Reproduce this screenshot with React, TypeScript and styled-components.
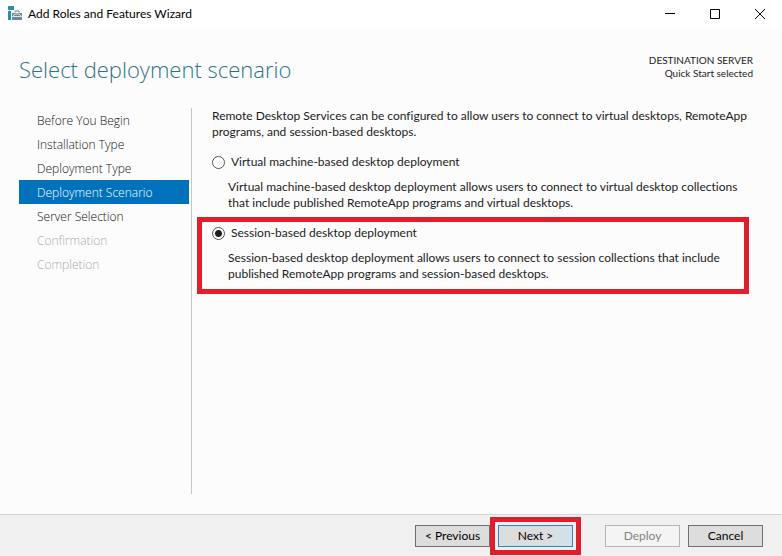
import React, { useState } from "react";
import styled, { createGlobalStyle, css } from "styled-components";

const GlobalStyle = createGlobalStyle`
  *, *::before, *::after { box-sizing: border-box; }
  body {
    margin: 0;
    background: #fcfcfc;
    color: #1b1b1b;
    font: 12px/16px Lato, "Open Sans", sans-serif;
    font-variant-ligatures: none;
  }
  h1, p, ol { margin: 0; padding: 0; }
`;

const Window = styled.div`
  display: flex;
  flex-direction: column;
  min-height: 100vh;
`;

const TitleBar = styled.header`
  display: flex;
  align-items: center;
  gap: 6px;
  height: 28px;
  padding-left: 7px;
  background: #fff;
  color: #000;
`;

const WindowTitle = styled.span`
  flex: 1;
`;

const CaptionButtons = styled.div`
  display: flex;
`;

const CaptionButton = styled.button`
  display: grid;
  place-items: center;
  width: 45px;
  height: 28px;
  padding: 0;
  border: 0;
  background: none;
  color: #000;
`;

const Heading = styled.div`
  display: flex;
  justify-content: space-between;
  align-items: flex-start;
  padding: 24px 29px 0 19px;
  height: 80px;
`;

const PageTitle = styled.h1`
  font-family: "Open Sans", sans-serif;
  font-size: 22px;
  line-height: 34px;
  font-weight: 300;
  color: #2e7385;
`;

const Destination = styled.div`
  padding-top: 2px;
  font-size: 10px;
  line-height: 13px;
  text-align: right;
`;

const Body = styled.main`
  display: flex;
  flex: 1;
  padding: 0 19px 20px;
`;

const Steps = styled.nav`
  flex: none;
  width: 173px;
  padding-right: 2px;
  border-right: 1px solid #c6c6c6;
`;

const StepList = styled.ol`
  list-style: none;
`;

const Step = styled.a<{ $state?: "current" | "disabled" }>`
  display: block;
  padding: 2px 0 0 18px;
  font-family: "Open Sans", sans-serif;
  font-size: 12px;
  line-height: 22px;
  font-weight: 300;
  text-decoration: none;
  color: #111;
  ${(p) => p.$state === "current" && css`background: #0072bc; color: #fff;`}
  ${(p) => p.$state === "disabled" && css`color: #aaa;`}
`;

const Content = styled.section`
  flex: 1;
  min-width: 0;
  padding: 0 8px 0 20px;
`;

const Options = styled.div`
  padding-top: 14px;
`;

const Option = styled.div`
  position: relative;
  padding-bottom: 14px;
`;

const OptionLabel = styled.label`
  display: flex;
  align-items: center;
  gap: 6px;
`;

const Radio = styled.input`
  appearance: none;
  flex: none;
  width: 13px;
  height: 13px;
  margin: 0;
  border: 1px solid #555;
  border-radius: 50%;
  background: #fff;
  &:checked { background: radial-gradient(circle, #1c1c1c 0 3px, #fff 4px); }
`;

const OptionText = styled.p`
  padding: 9px 0 0 16px;
`;

const Highlight = styled.span<{ $area: "option" | "button" }>`
  position: absolute;
  border: 5px solid #df1f2b;
  pointer-events: none;
  ${(p) => p.$area === "option"
    ? css`inset: -8px 6px 2px -15px;`
    : css`inset: -8px;`}
`;

const Footer = styled.footer`
  display: flex;
  justify-content: flex-end;
  gap: 8px;
  height: 42px;
  padding: 10px 19px 0 0;
  border-top: 1px solid #d5d5d5;
  background: #f0f0f0;
`;

const ButtonSlot = styled.div`
  position: relative;
  height: 22px;
`;

const Button = styled.button<{ $primary?: boolean }>`
  width: 75px;
  height: 22px;
  padding: 0;
  border: 1px solid #707070;
  background: #ddd;
  color: #000;
  font: inherit;
  ${(p) => p.$primary && css`
    border-color: #3c7fb1;
    background: linear-gradient(to right, #ddd 60%, #cfe3ee);
    box-shadow: inset 0 0 0 1px #cfe6f2;
  `}
  &:disabled { border-color: #b5b5b5; background: #f4f4f4; color: #838383; }
`;

const Spacer = styled.span`
  width: 16px;
`;

function WizardIcon() {
  return (
    <svg width="15" height="16" viewBox="0 0 15 16" aria-hidden="true">
      <path d="M1 0h6v4H1zM1 5h3v9H1z" fill="#2e8bb3" />
      <path d="M8 6.5V5h4v1.5" fill="none" stroke="#6f8799" />
      <path d="M5 7h10v7H5z" fill="#6f8799" />
      <path d="M6 10l2-2h4l2 2M5 10.5h10" fill="none" stroke="#dce5ea" />
    </svg>
  );
}

const steps: { name: string; state?: "current" | "disabled" }[] = [
  { name: "Before You Begin" },
  { name: "Installation Type" },
  { name: "Deployment Type" },
  { name: "Deployment Scenario", state: "current" },
  { name: "Server Selection" },
  { name: "Confirmation", state: "disabled" },
  { name: "Completion", state: "disabled" },
];

const scenarios = [
  {
    id: "vm",
    label: "Virtual machine-based desktop deployment",
    text: "Virtual machine-based desktop deployment allows users to connect to virtual desktop collections that include published RemoteApp programs and virtual desktops.",
  },
  {
    id: "session",
    label: "Session-based desktop deployment",
    text: "Session-based desktop deployment allows users to connect to session collections that include published RemoteApp programs and session-based desktops.",
    highlighted: true,
  },
];

export default function App() {
  const [scenario, setScenario] = useState("session");
  return (
    <Window>
      <GlobalStyle />
      <TitleBar>
        <WizardIcon />
        <WindowTitle>Add Roles and Features Wizard</WindowTitle>
        <CaptionButtons>
          <CaptionButton aria-label="Minimize">
            <svg width="10" height="10"><path d="M0 4.5h10" stroke="currentColor" /></svg>
          </CaptionButton>
          <CaptionButton aria-label="Maximize">
            <svg width="10" height="10"><path d="M.5.5h9v9h-9z" fill="none" stroke="currentColor" /></svg>
          </CaptionButton>
          <CaptionButton aria-label="Close">
            <svg width="10" height="10"><path d="M0 0l10 10M10 0L0 10" stroke="currentColor" /></svg>
          </CaptionButton>
        </CaptionButtons>
      </TitleBar>
      <Heading>
        <PageTitle>Select deployment scenario</PageTitle>
        <Destination>
          <div>DESTINATION SERVER</div>
          <div>Quick Start selected</div>
        </Destination>
      </Heading>
      <Body>
        <Steps aria-label="Wizard steps">
          <StepList>
            {steps.map((s) => (
              <li key={s.name}>
                <Step
                  href={s.state === "disabled" ? undefined : "#"}
                  $state={s.state}
                  aria-current={s.state === "current" ? "step" : undefined}
                  aria-disabled={s.state === "disabled" || undefined}
                >
                  {s.name}
                </Step>
              </li>
            ))}
          </StepList>
        </Steps>
        <Content>
          <p>
            Remote Desktop Services can be configured to allow users to connect to virtual desktops, RemoteApp
            programs, and session-based desktops.
          </p>
          <Options role="radiogroup" aria-label="Deployment scenario">
            {scenarios.map((s) => (
              <Option key={s.id}>
                <OptionLabel>
                  <Radio
                    type="radio"
                    name="scenario"
                    checked={scenario === s.id}
                    aria-describedby={s.id + "-text"}
                    onChange={() => setScenario(s.id)}
                  />
                  {s.label}
                </OptionLabel>
                <OptionText id={s.id + "-text"}>{s.text}</OptionText>
                {s.highlighted && <Highlight $area="option" />}
              </Option>
            ))}
          </Options>
        </Content>
      </Body>
      <Footer>
        <Button>&lt; Previous</Button>
        <ButtonSlot>
          <Button $primary>Next &gt;</Button>
          <Highlight $area="button" />
        </ButtonSlot>
        <Spacer />
        <Button disabled>Deploy</Button>
        <Button>Cancel</Button>
      </Footer>
    </Window>
  );
}
